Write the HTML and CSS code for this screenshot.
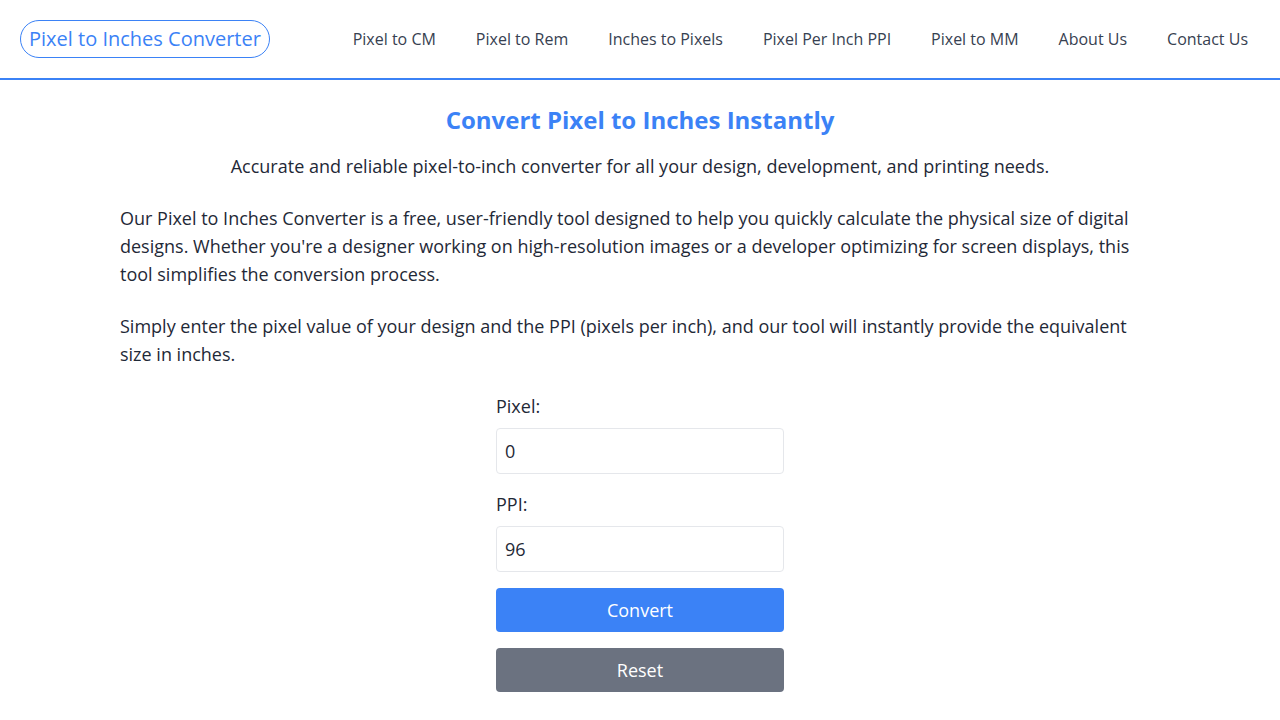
FILE: index.html
```html
<!DOCTYPE html>
<html>
  <head>
    <title>Pixel to Inches Converter</title>
    <meta charset="UTF-8">
    <meta name="viewport" content="width=device-width, initial-scale=1.0">
    <link rel="stylesheet" href="styles.css">
  </head>
  <body>
    <header class="site-header">
      <a href="#" class="logo">Pixel to Inches Converter</a>
      <nav class="main-nav">
        <a href="#">Pixel to CM</a>
        <a href="#">Pixel to Rem</a>
        <a href="#">Inches to Pixels</a>
        <a href="#">Pixel Per Inch PPI</a>
        <a href="#">Pixel to MM</a>
        <a href="#">About Us</a>
        <a href="#">Contact Us</a>
      </nav>
    </header>
    <main class="container">
      <h1>Convert Pixel to Inches Instantly</h1>
      <p class="tagline">Accurate and reliable pixel-to-inch converter for all your design, development, and printing needs.</p>
      <p>Our Pixel to Inches Converter is a free, user-friendly tool designed to help you quickly calculate the physical size of digital designs. Whether you're a designer working on high-resolution images or a developer optimizing for screen displays, this tool simplifies the conversion process.</p>
      <p>Simply enter the pixel value of your design and the PPI (pixels per inch), and our tool will instantly provide the equivalent size in inches.</p>
      <form class="converter">
        <label for="pixel">Pixel:</label>
        <input type="number" id="pixel" value="0">
        <label for="ppi">PPI:</label>
        <input type="number" id="ppi" value="96">
        <button type="submit" class="btn convert">Convert</button>
        <button type="reset" class="btn reset">Reset</button>
        <div id="result" class="result"></div>
      </form>
    </main>
    <script>
      const form = document.querySelector('.converter');
      const pixelInput = document.querySelector('#pixel');
      const ppiInput = document.querySelector('#ppi');
      const result = document.querySelector('#result');

      form.addEventListener('submit', (e) => {
        e.preventDefault();
        const pixels = parseFloat(pixelInput.value) || 0;
        const ppi = parseFloat(ppiInput.value) || 96;
        result.innerText = `${pixels} px = ${(pixels / ppi).toFixed(4)} inches`;
      });

      form.addEventListener('reset', () => {
        result.innerText = '';
      });
    </script>
  </body>
</html>
```

FILE: styles.css
```css
body {
  font-family: "Open Sans", sans-serif;
  margin: 0;
  padding: 0;
  color: #1f2937;
  background: #fff;
}
.site-header {
  display: flex;
  align-items: center;
  justify-content: space-between;
  padding: 20px 32px 20px 20px;
  border-bottom: 2px solid #3b82f6;
}
.logo {
  font-size: 20px;
  line-height: 28px;
  padding: 4px 8px;
  color: #3b82f6;
  border: 1px solid #3b82f6;
  border-radius: 9999px;
  text-decoration: none;
}
.main-nav {
  display: flex;
  gap: 40px;
}
.main-nav a {
  font-size: 16px;
  line-height: 24px;
  color: #374151;
  text-decoration: none;
}
.container {
  max-width: 1040px;
  margin: 0 auto;
  padding-top: 24px;
}
h1 {
  font-size: 24px;
  line-height: 32px;
  font-weight: 700;
  color: #3b82f6;
  text-align: center;
  margin: 0 0 16px;
}
p {
  font-size: 18px;
  line-height: 28px;
  margin: 0 0 24px;
}
.tagline {
  text-align: center;
}
.converter {
  width: 288px;
  margin: 0 auto;
  display: flex;
  flex-direction: column;
}
label {
  font-size: 18px;
  line-height: 28px;
  margin-bottom: 8px;
}
input[type="number"] {
  font-family: inherit;
  font-size: 18px;
  line-height: 28px;
  padding: 8px;
  border: 1px solid #e5e7eb;
  border-radius: 4px;
  color: #1f2937;
  margin-bottom: 16px;
  -moz-appearance: textfield;
}
input::-webkit-outer-spin-button,
input::-webkit-inner-spin-button {
  -webkit-appearance: none;
  margin: 0;
}
.btn {
  font-family: inherit;
  font-size: 18px;
  line-height: 28px;
  padding: 8px;
  border: none;
  border-radius: 4px;
  color: #fff;
  cursor: pointer;
  margin-bottom: 16px;
}
.btn.convert {
  background-color: #3b82f6;
}
.btn.reset {
  background-color: #6b7280;
}
.result {
  font-size: 18px;
  text-align: center;
}
```
